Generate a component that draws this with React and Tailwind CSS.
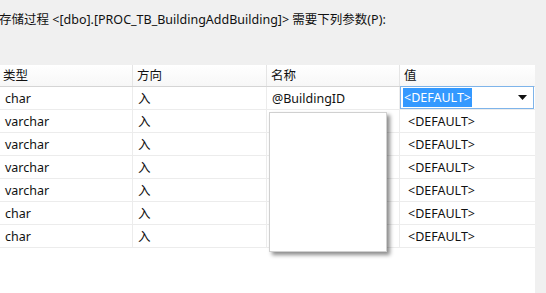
import React from 'react';

const rows = [
  { type: 'char', dir: '入', name: '@BuildingID' },
  { type: 'varchar', dir: '入', name: '' },
  { type: 'varchar', dir: '入', name: '' },
  { type: 'varchar', dir: '入', name: '' },
  { type: 'varchar', dir: '入', name: '' },
  { type: 'char', dir: '入', name: '' },
  { type: 'char', dir: '入', name: '' },
];

const font = { fontFamily: '"Noto Sans", "Noto Sans CJK SC", sans-serif' };

const App = () => {
  return (
    <div className="w-[546px] h-[293px] bg-[#f0f0f0] overflow-hidden relative text-[12.5px] text-[#111]" style={font}>
      {/* Title */}
      <div className="h-[65px] pt-[11px] whitespace-nowrap -ml-[1px]">
        存储过程 &lt;[dbo].[PROC_TB_BuildingAddBuilding]&gt; 需要下列参数(P):
      </div>

      {/* Grid */}
      <div className="w-[535px] h-[228px] bg-white">
        <div className="flex h-[22px] bg-gradient-to-b from-white to-[#f7f7f7] border-b border-[#d5d5d5]">
          <div className="w-[133px] pl-[3px] leading-[22px] border-r border-[#e5e5e5]">类型</div>
          <div className="w-[134px] pl-[4px] leading-[22px] border-r border-[#e5e5e5]">方向</div>
          <div className="w-[133px] pl-[4px] leading-[22px] border-r border-[#e5e5e5]">名称</div>
          <div className="w-[134px] pl-[4px] leading-[22px]">值</div>
        </div>
        {rows.map((r, i) => (
          <div key={i} className="flex h-[23px] border-b border-[#ececec]">
            <div className="w-[133px] pl-[5px] leading-[23px] border-r border-[#ececec]">{r.type}</div>
            <div className="w-[134px] pl-[5px] leading-[23px] border-r border-[#ececec]">{r.dir}</div>
            <div className="w-[133px] pl-[5px] leading-[23px] border-r border-[#ececec]">{r.name}</div>
            {i === 0 ? (
              <div className="w-[134px] h-[23px] -mt-[1px] border border-[#7eb4ea] bg-white flex items-center pl-[2px] pr-[6px]">
                <span className="bg-[#3399ff] text-white px-[1px] leading-[19px]">&lt;DEFAULT&gt;</span>
                <svg className="ml-auto" width="9" height="5" viewBox="0 0 9 5">
                  <path d="M0 0 H9 L4.5 5 Z" fill="#111" />
                </svg>
              </div>
            ) : (
              <div className="w-[134px] pl-[8px] leading-[23px]">&lt;DEFAULT&gt;</div>
            )}
          </div>
        ))}
      </div>

      {/* Dropdown popup over the name column */}
      <div className="absolute left-[269px] top-[112px] w-[118px] h-[140px] bg-white border border-[#d0d0d0] shadow-[3px_3px_4px_rgba(0,0,0,0.45)]" />
    </div>
  );
};

export default App;
